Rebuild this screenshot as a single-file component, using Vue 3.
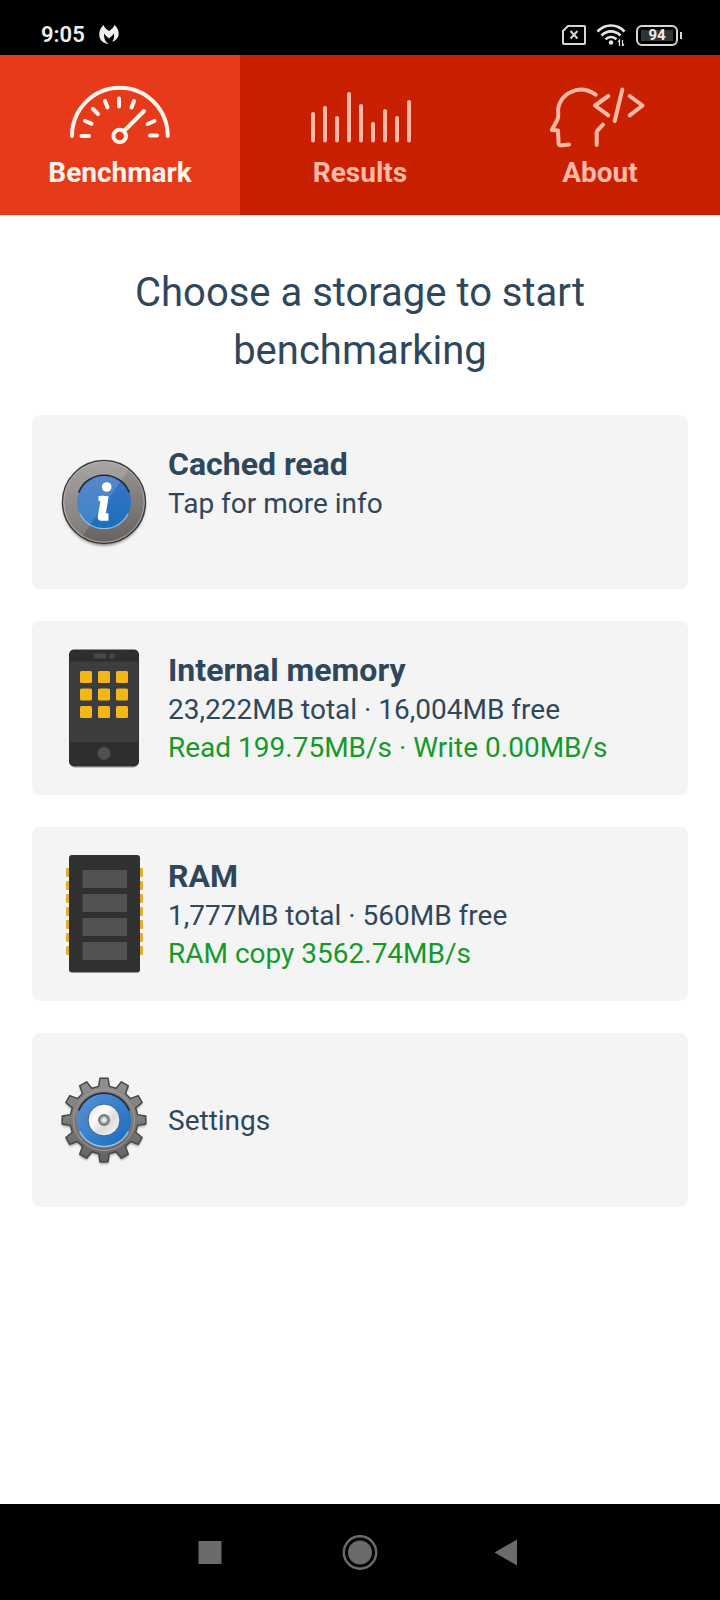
<template>
  <div class="screen">
    <header class="status-bar">
      <div class="status-left">
        <span class="clock">9:05</span>
        <svg class="notification" width="20" height="20" viewBox="0 0 20 20" aria-hidden="true">
          <path
            d="M4.5 0 C1 3 0 7 .3 10.500 C.7 15 4 18.500 9.500 19 C7 17 5.300 14.500 5.100 11.500 C5 10.500 5 9.500 5.300 8.500 C6.600 10.500 8 12 10 13.500 C12 12 13.400 10.500 14.700 8.500 C15.500 11 15.300 13.500 13.200 16.700 C17.500 15.500 19.600 12 19.700 9 C19.800 6 18.500 2.500 15.500 0 C14.300 3 12.500 4.500 10 6 C7.500 4.500 5.700 3 4.500 0 Z"
            fill="#eee"
          />
        </svg>
      </div>
      <div class="status-right">
        <svg width="24" height="20" viewBox="0 0 24 20" fill="none" stroke="#d6d6d6" stroke-width="2" aria-hidden="true">
          <path d="M6 1 H22 Q23 1 23 2 V18 Q23 19 22 19 H2 Q1 19 1 18 V6 Z" />
          <path d="M8.500 6 L15.500 13.500 M15.500 6 L8.500 13.500" />
        </svg>
        <svg width="30" height="22" viewBox="0 0 30 22" fill="none" stroke="#e6e6e6" stroke-width="2.600" aria-hidden="true">
          <path d="M1.500 7.500 C9 -.5 21 -.5 28.500 7.500" />
          <path d="M5.500 11.500 C11 6 19 6 24.500 11.500" />
          <path d="M9.500 15.300 C12.500 12.300 17.500 12.300 20.500 15.300" />
          <circle cx="15" cy="18.500" r="2.200" fill="#e6e6e6" stroke="none" />
          <path d="M23.500 22 V16 L22 18 M26.500 16 V22 L28 20" stroke-width="1.200" />
        </svg>
        <div class="battery"><span class="battery-level">94</span></div>
      </div>
    </header>

    <nav class="tabs">
      <button
        v-for="tab in tabs"
        :key="tab.id"
        type="button"
        class="tab"
        :class="{ active: tab.id === activeTab }"
        @click="activeTab = tab.id"
      >
        <svg class="tab-icon" width="120" height="70" viewBox="0 0 120 70" aria-hidden="true">
          <g v-if="tab.id === 'benchmark'">
            <path d="M12 56 A47.850 48.300 0 0 1 107.700 56" />
            <path
              d="M21.500 56 H29 M90 55.500 H97 M25 41 L31.500 43.700 M33 29 L38 34 M45 21 L47.500 27.500 M59 18.500 V26.500 M74 21 L71.500 27.500 M94.500 41 L87.500 44 M84 31 L65 50"
            />
            <circle cx="59.700" cy="56" r="6.300" />
          </g>
          <g v-else-if="tab.id === 'results'">
            <path d="M13 34 V60.500 M25 28 V60.500 M37 38 V60.500 M49 14 V60.500 M61 26 V60.500 M73 44 V60.500 M85 31 V60.500 M97 38 V60.500 M109 22 V60.500" />
          </g>
          <g v-else>
            <path d="M55.700 14.700 C48 9.500 39 8 31 12 C22 16 17 25 18.300 34 C18.500 37 18 39 17 40.500 L11.800 50 L18 50.500 L18.500 62 C18.500 65 19 65.700 22 65.300 L29 64.500" />
            <path d="M63 44.700 L57.500 50.500 Q56.700 51.500 56.700 53 V65" />
            <path d="M68.300 16 L55 25.500 L68.300 35.300 M82.300 9.500 L74.700 41 M89.700 16 L102.500 25.500 L89.700 35.300" />
          </g>
        </svg>
        <span class="tab-label">{{ tab.label }}</span>
      </button>
    </nav>

    <main class="content">
      <h1 class="heading">Choose a storage to start benchmarking</h1>

      <div class="cards">
        <button v-for="item in items" :key="item.id" type="button" class="card" :class="{ single: !item.title }">
          <svg v-if="item.id === 'cached'" class="card-icon" width="88" height="120" viewBox="0 0 88 120" aria-hidden="true">
            <defs>
              <linearGradient id="info-rim" x1="0" y1="0" x2="0" y2="1">
                <stop offset="0" stop-color="#9b9694" />
                <stop offset="1" stop-color="#656260" />
              </linearGradient>
              <linearGradient id="info-blue" x1="0" y1="0" x2="0" y2="1">
                <stop offset="0" stop-color="#3f74c4" />
                <stop offset="1" stop-color="#176fbd" />
              </linearGradient>
              <clipPath id="info-clip"><circle cx="44" cy="60" r="41" /></clipPath>
              <filter id="soft"><feGaussianBlur stdDeviation="1.500" /></filter>
            </defs>
            <circle cx="44" cy="62.500" r="41" fill="#000" opacity=".45" filter="url(#soft)" />
            <circle cx="44" cy="60" r="41.500" fill="url(#info-rim)" stroke="#393939" stroke-width="1.400" />
            <circle cx="44" cy="60" r="40.200" fill="none" stroke="#aaa6a3" stroke-width="1" />
            <circle cx="44" cy="60" r="27" fill="url(#info-blue)" />
            <path d="M0 0 H88 L21 96 L0 110 Z" fill="#fff" opacity=".14" clip-path="url(#info-clip)" />
            <path d="M19 50 A27 27 0 0 1 69 50" fill="none" stroke="#262c36" stroke-width="1.600" stroke-linecap="round" />
            <path d="M20 72 A27 27 0 0 0 68 72" fill="none" stroke="#91bce4" stroke-width="1.300" stroke-linecap="round" />
            <circle cx="46.700" cy="45" r="4.800" fill="#fff" />
            <path d="M38.500 56.500 H45" fill="none" stroke="#fff" stroke-width="5" />
            <path d="M45 54 L41.500 75 H48.500" fill="none" stroke="#fff" stroke-width="7.500" stroke-linejoin="round" />
          </svg>

          <svg v-else-if="item.id === 'internal'" class="card-icon" width="88" height="120" viewBox="0 0 88 120" aria-hidden="true">
            <rect x="10" y="4" width="68" height="116" rx="5" fill="#000" opacity=".2" />
            <rect x="9" y="1.500" width="70" height="117" rx="5" fill="#2e2e2e" />
            <rect x="10" y="13.500" width="68" height="81" fill="#3d3d3d" />
            <rect x="34" y="5.500" width="12" height="5" rx="1" fill="#484848" />
            <rect x="49" y="5.500" width="6" height="5" rx="2" fill="#484848" />
            <template v-for="row in 3" :key="row">
              <rect
                v-for="col in 3"
                :key="col"
                :x="2 + col * 18"
                :y="5.5 + row * 17.5"
                width="12"
                height="12"
                rx="1.500"
                fill="#f5b618"
              />
            </template>
            <circle cx="44" cy="105.500" r="6.500" fill="#505050" />
          </svg>

          <svg v-else-if="item.id === 'ram'" class="card-icon" width="88" height="120" viewBox="0 0 88 120" aria-hidden="true">
            <rect v-for="pin in 7" :key="pin" x="6" :y="1 + pin * 13" width="77" height="9" rx="1" fill="#e0ae36" />
            <rect x="9" y="1" width="71" height="117.500" rx="3" fill="#303030" />
            <rect v-for="chip in 4" :key="chip" x="22.500" :y="chip * 24 - 8" width="44.500" height="18" fill="#525252" />
          </svg>

          <svg v-else class="card-icon" width="88" height="120" viewBox="0 0 88 120" aria-hidden="true">
            <defs>
              <linearGradient id="gear-metal" x1="0" y1="0" x2="0" y2="1">
                <stop offset="0" stop-color="#94908d" />
                <stop offset="1" stop-color="#656260" />
              </linearGradient>
              <linearGradient id="gear-blue" x1="0" y1="0" x2="1" y2="1">
                <stop offset="0" stop-color="#5a93d8" />
                <stop offset="1" stop-color="#176cbb" />
              </linearGradient>
              <linearGradient id="gear-hub" x1="0" y1="0" x2="1" y2="1">
                <stop offset="0" stop-color="#d4d4d4" />
                <stop offset=".35" stop-color="#fff" />
                <stop offset=".6" stop-color="#dcdcdc" />
                <stop offset="1" stop-color="#fafafa" />
              </linearGradient>
              <filter id="gear-soft"><feGaussianBlur stdDeviation="1.200" /></filter>
            </defs>
            <path :d="gearPath" transform="translate(0 2)" fill="#000" opacity=".4" filter="url(#gear-soft)" />
            <path :d="gearPath" fill="url(#gear-metal)" stroke="#444" stroke-width="1.400" stroke-linejoin="round" />
            <circle cx="44" cy="60" r="30.500" fill="none" stroke="#a09c99" stroke-width="1" />
            <circle cx="44" cy="60" r="27" fill="url(#gear-blue)" />
            <path d="M19 50 A27 27 0 0 1 69 50" fill="none" stroke="#252e3b" stroke-width="1.800" stroke-linecap="round" />
            <path d="M20 72 A27 27 0 0 0 68 72" fill="none" stroke="#9bc1e3" stroke-width="1.600" stroke-linecap="round" />
            <circle cx="44" cy="60" r="16" fill="url(#gear-hub)" stroke="#345d8a" stroke-width="1" />
            <circle cx="44" cy="60" r="5" fill="#aaa" stroke="#777" stroke-width="2" />
            <circle cx="44" cy="60" r="2.500" fill="#e6e6e6" />
          </svg>

          <span class="card-text">
            <strong v-if="item.title" class="card-title">{{ item.title }}</strong>
            <span class="card-line">{{ item.detail }}</span>
            <span v-if="item.speed" class="card-line speed">{{ item.speed }}</span>
          </span>
        </button>
      </div>
    </main>

    <footer class="system-nav">
      <button type="button" aria-label="Recent apps">
        <svg width="36" height="36" viewBox="0 0 36 36"><rect x="6.500" y="7" width="23" height="23" fill="#6b6b6b" /></svg>
      </button>
      <button type="button" aria-label="Home">
        <svg width="36" height="36" viewBox="0 0 36 36">
          <circle cx="18" cy="18.500" r="16.200" fill="none" stroke="#6b6b6b" stroke-width="2.400" />
          <circle cx="18" cy="18.500" r="12" fill="#6b6b6b" />
        </svg>
      </button>
      <button type="button" aria-label="Back">
        <svg width="36" height="36" viewBox="0 0 36 36"><path d="M2.500 18.500 L25 5.500 V31.500 Z" fill="#6b6b6b" /></svg>
      </button>
    </footer>
  </div>
</template>

<script setup>
import { ref } from 'vue'

const activeTab = ref('benchmark')

const tabs = [
  { id: 'benchmark', label: 'Benchmark' },
  { id: 'results', label: 'Results' },
  { id: 'about', label: 'About' }
]

const items = [
  { id: 'cached', title: 'Cached read', detail: 'Tap for more info' },
  {
    id: 'internal',
    title: 'Internal memory',
    detail: '23,222MB total · 16,004MB free',
    speed: 'Read 199.75MB/s · Write 0.00MB/s'
  },
  {
    id: 'ram',
    title: 'RAM',
    detail: '1,777MB total · 560MB free',
    speed: 'RAM copy 3562.74MB/s'
  },
  { id: 'settings', detail: 'Settings' }
]

// twelve teeth, each one a trapezoid on the rim
const gearPath = buildGear(12, 34, 42)

function buildGear(teeth, inner, outer) {
  const points = []
  const corners = [[-9, inner], [-5.5, outer], [5.5, outer], [9, inner]]
  for (let i = 0; i < teeth; i++) {
    for (const [offset, radius] of corners) {
      const angle = ((i * 360) / teeth + offset - 90) * (Math.PI / 180)
      points.push(`${(44 + radius * Math.cos(angle)).toFixed(2)} ${(60 + radius * Math.sin(angle)).toFixed(2)}`)
    }
  }
  return `M${points.join(' L')} Z`
}
</script>

<style>
body {
  margin: 0;
  background: #fff;
}
</style>

<style scoped>
.screen {
  display: flex;
  flex-direction: column;
  min-height: 100vh;
  font-family: Roboto, "Liberation Sans", sans-serif;
  color: #2f475b;
}

button {
  margin: 0;
  padding: 0;
  border: 0;
  background: none;
  font: inherit;
  color: inherit;
  cursor: pointer;
}

svg {
  display: block;
  flex: none;
}

.status-bar {
  display: flex;
  justify-content: space-between;
  align-items: flex-end;
  box-sizing: border-box;
  height: 55px;
  padding: 0 37px 9px 41px;
  background: #000;
  color: #eee;
}

.status-left,
.status-right {
  display: flex;
  align-items: center;
}

.status-left {
  gap: 14px;
}

.status-right {
  gap: 10px;
}

.clock {
  font-size: 22px;
  line-height: 22px;
  font-weight: 600;
}

.battery {
  position: relative;
  display: flex;
  box-sizing: border-box;
  width: 42px;
  height: 21px;
  margin-right: 5px;
  padding: 3px;
  border: 2px solid #d6d6d6;
  border-radius: 6px;
}

.battery::after {
  content: "";
  position: absolute;
  top: 5px;
  right: -6px;
  width: 2px;
  height: 7px;
  background: #d6d6d6;
}

.battery-level {
  display: flex;
  flex: 1;
  align-items: center;
  justify-content: center;
  background: #333;
  font-size: 15px;
  line-height: 11px;
  font-weight: 700;
}

.tabs {
  display: grid;
  grid-template-columns: repeat(3, 1fr);
  background: #c82000;
}

.tab {
  display: flex;
  flex-direction: column;
  align-items: center;
  gap: 6px;
  padding: 25px 0;
  color: #ffb9a8;
}

.tab.active {
  background: #e63a1b;
  color: #fff4ec;
}

.tab-icon {
  fill: none;
  stroke: currentColor;
  stroke-width: 4;
  stroke-linecap: round;
  stroke-linejoin: round;
}

.tab-label {
  font-size: 28px;
  line-height: 34px;
  font-weight: 700;
}

.content {
  flex: 1;
  padding: 49px 32px;
}

.heading {
  margin: 0 0 35px;
  padding: 0 60px;
  font-size: 40px;
  line-height: 58px;
  font-weight: 400;
  text-align: center;
}

.cards {
  display: flex;
  flex-direction: column;
  gap: 32px;
}

.card {
  display: flex;
  align-items: center;
  gap: 20px;
  box-sizing: border-box;
  min-height: 174px;
  padding: 0 28px;
  border-radius: 8px;
  background: #f4f4f4;
  text-align: left;
}

.card-text {
  display: flex;
  flex-direction: column;
  align-self: flex-start;
  padding: 28px 0;
}

.card.single .card-text {
  align-self: center;
  padding-top: 30px;
}

.card-title {
  font-size: 32px;
  line-height: 42px;
  font-weight: 700;
}

.card-line {
  font-size: 28px;
  line-height: 38px;
}

.card-line.speed {
  color: #14992b;
}

.system-nav {
  display: flex;
  justify-content: center;
  height: 96px;
  background: #000;
}

.system-nav button {
  display: flex;
  align-items: center;
  justify-content: center;
  width: 150px;
}
</style>
